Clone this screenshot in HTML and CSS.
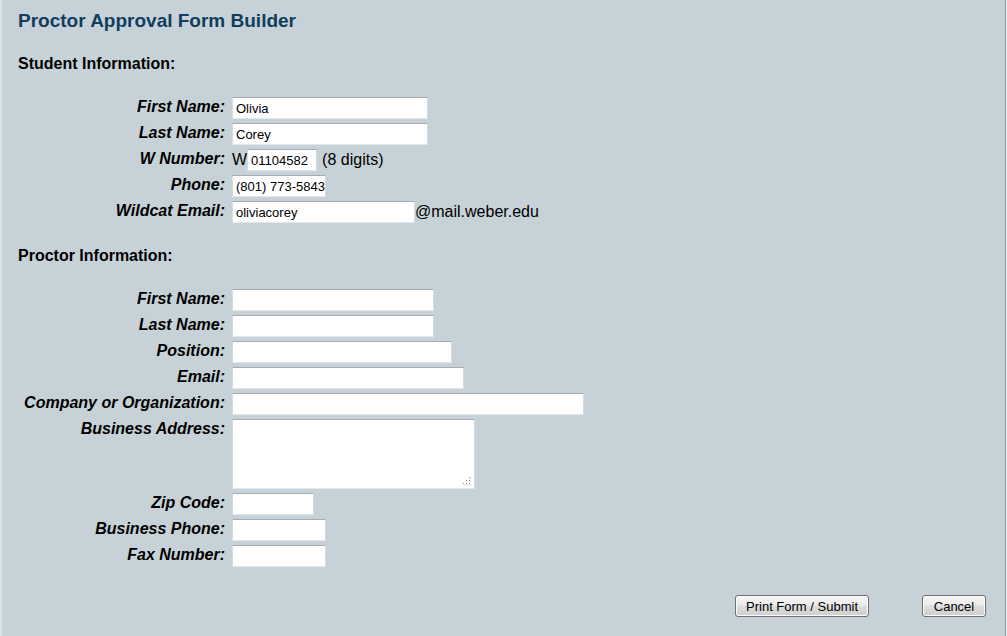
FILE: index.html
```html
<!DOCTYPE html>
<html>
<head>
<meta charset="utf-8">
<title>Proctor Approval Form Builder</title>
<link rel="stylesheet" href="styles.css">
</head>
<body>
<div class="page">
  <h1 class="title">Proctor Approval Form Builder</h1>

  <h2 class="section">Student Information:</h2>
  <div class="form-grid">
    <label class="lbl">First Name:</label>
    <div class="field"><input class="txt w196" type="text" value="Olivia"></div>
    <label class="lbl">Last Name:</label>
    <div class="field"><input class="txt w196" type="text" value="Corey"></div>
    <label class="lbl">W Number:</label>
    <div class="field"><span class="plain">W</span><input class="txt w70" type="text" value="01104582"><span class="plain gap">(8 digits)</span></div>
    <label class="lbl">Phone:</label>
    <div class="field"><input class="txt w94 tight" type="text" value="(801) 773-5843"></div>
    <label class="lbl">Wildcat Email:</label>
    <div class="field"><input class="txt w183" type="text" value="oliviacorey"><span class="plain">@mail.weber.edu</span></div>
  </div>

  <h2 class="section">Proctor Information:</h2>
  <div class="form-grid">
    <label class="lbl">First Name:</label>
    <div class="field"><input class="txt w202" type="text"></div>
    <label class="lbl">Last Name:</label>
    <div class="field"><input class="txt w202" type="text"></div>
    <label class="lbl">Position:</label>
    <div class="field"><input class="txt w220" type="text"></div>
    <label class="lbl">Email:</label>
    <div class="field"><input class="txt w232" type="text"></div>
    <label class="lbl">Company or Organization:</label>
    <div class="field"><input class="txt w352" type="text"></div>
    <label class="lbl">Business Address:</label>
    <div class="field field-area">
      <div class="area-wrap">
        <textarea class="area"></textarea>
        <svg class="grip" width="9" height="9" viewBox="0 0 9 9" aria-hidden="true">
          <rect x="7" y="1" width="1" height="1" fill="#8a8a8a"/>
          <rect x="4" y="4" width="1" height="1" fill="#8a8a8a"/>
          <rect x="7" y="4" width="1" height="1" fill="#8a8a8a"/>
          <rect x="1" y="7" width="1" height="1" fill="#8a8a8a"/>
          <rect x="4" y="7" width="1" height="1" fill="#8a8a8a"/>
          <rect x="7" y="7" width="1" height="1" fill="#8a8a8a"/>
          <rect x="8" y="2" width="1" height="1" fill="#d0d0d0"/>
          <rect x="5" y="5" width="1" height="1" fill="#d0d0d0"/>
          <rect x="8" y="5" width="1" height="1" fill="#d0d0d0"/>
          <rect x="2" y="8" width="1" height="1" fill="#d0d0d0"/>
          <rect x="5" y="8" width="1" height="1" fill="#d0d0d0"/>
          <rect x="8" y="8" width="1" height="1" fill="#d0d0d0"/>
        </svg>
      </div>
    </div>
    <label class="lbl">Zip Code:</label>
    <div class="field"><input class="txt w82" type="text"></div>
    <label class="lbl">Business Phone:</label>
    <div class="field"><input class="txt w94" type="text"></div>
    <label class="lbl">Fax Number:</label>
    <div class="field"><input class="txt w94" type="text"></div>
  </div>

  <div class="actions">
    <button class="btn" type="button">Print Form / Submit</button>
    <button class="btn btn-cancel" type="button">Cancel</button>
  </div>
</div>
</body>
</html>
```
FILE: styles.css
```css
html, body {
  margin: 0;
  padding: 0;
  background: #e6eaec;
}

body {
  font-family: "Liberation Sans", Arial, sans-serif;
  color: #000;
}

.page {
  box-sizing: border-box;
  min-height: 636px;
  margin-right: 1px;
  background: #c6d2d7;
  border-left: 2px solid #dbe2e5;
  border-right: 1px solid #8e999e;
  padding: 10px 19px 0 16px;
}

.title {
  margin: 0;
  font-size: 19px;
  line-height: 22px;
  font-weight: bold;
  color: #123d5d;
}

.section {
  margin: 23px 0 24px;
  font-size: 16px;
  line-height: 18px;
  font-weight: bold;
}

.form-grid + .section {
  margin-top: 24px;
}

.form-grid {
  display: grid;
  grid-template-columns: 207px auto;
  column-gap: 7px;
  row-gap: 4px;
  align-items: start;
}

.lbl {
  text-align: right;
  font-size: 16px;
  font-weight: bold;
  font-style: italic;
  line-height: 20px;
  white-space: nowrap;
}

.field {
  display: flex;
  align-items: center;
  height: 22px;
}

.field-area {
  height: auto;
}

.area-wrap {
  position: relative;
  display: flex;
}

.grip {
  position: absolute;
  right: 4px;
  bottom: 4px;
}

.plain {
  font-size: 16px;
  line-height: 22px;
}

.plain.gap {
  margin-left: 5px;
}

.txt, .area {
  box-sizing: border-box;
  height: 22px;
  margin: 0;
  padding: 0 3px;
  border: 1px solid;
  border-color: #a7abb0 #d6dbe0 #e4e8ec #d6dbe0;
  background: #fff;
  font-family: "Liberation Sans", Arial, sans-serif;
  font-size: 13px;
  color: #000;
  outline: none;
}

.txt.tight {
  padding: 0 0 0 3px;
}

.area {
  width: 243px;
  height: 70px;
  padding: 2px 3px;
  resize: none;
}

.w70 { width: 70px; }
.w82 { width: 82px; }
.w94 { width: 94px; }
.w183 { width: 183px; }
.w196 { width: 196px; }
.w202 { width: 202px; }
.w220 { width: 220px; }
.w232 { width: 232px; }
.w352 { width: 352px; }

.actions {
  display: flex;
  justify-content: flex-end;
  gap: 53px;
  margin-top: 28px;
}

.btn {
  box-sizing: border-box;
  height: 22px;
  padding: 0 10px;
  border: 1px solid #707070;
  border-radius: 3px;
  background: linear-gradient(#f4f4f4 0%, #ececec 45%, #dddddd 50%, #cfcfcf 100%);
  font-family: "Liberation Sans", Arial, sans-serif;
  font-size: 13px;
  color: #000;
  box-shadow: inset 0 0 0 1px #fcfcfc;
}

.btn-cancel {
  min-width: 64px;
}
```
